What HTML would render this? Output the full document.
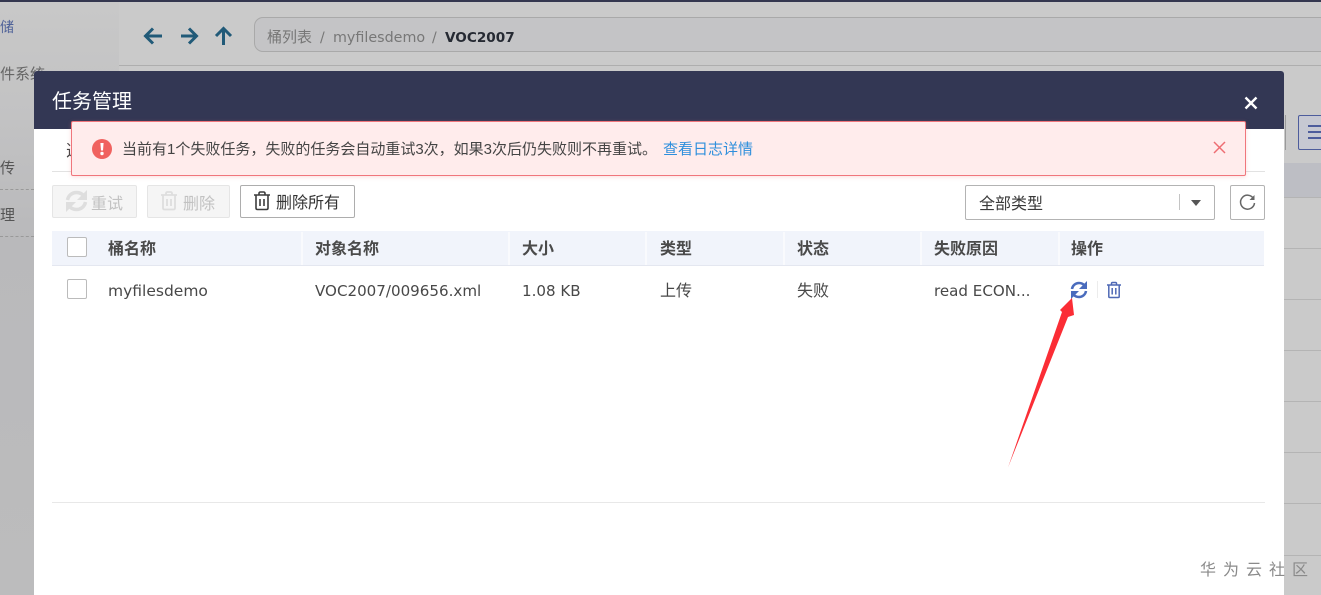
<!DOCTYPE html>
<html lang="zh"><head><meta charset="utf-8"><title>任务管理</title>
<style>
html,body{margin:0;padding:0}
body{width:1321px;height:595px;overflow:hidden;position:relative;background:#cacaca;font-family:"Liberation Sans","Noto Sans CJK SC",sans-serif;color:#3a3a3a}
.a{position:absolute;white-space:nowrap}
.l{position:absolute;background:#b4b4b4;height:1px}
.th{position:absolute;top:240px;font-size:16px;line-height:20px;font-weight:700;color:#4a4a4a;white-space:nowrap}
.td{position:absolute;top:281px;font-family:"DejaVu Sans","Noto Sans CJK SC",sans-serif;font-size:15.1px;line-height:20px;color:#484848;white-space:nowrap}
.tc{position:absolute;top:282px;font-size:16px;line-height:20px;color:#484848;white-space:nowrap}
.sep{position:absolute;top:232px;width:2px;height:33px;background:#f9fafd}
.btn{position:absolute;top:185px;height:33px;box-sizing:border-box;border-radius:2px;font-size:16px;white-space:nowrap}
.dis{background:#f5f5f5;border:1px solid #e5e5e5;color:#c2c2c2}
.cb{position:absolute;left:67px;width:18px;height:18px;border:1px solid #bbb;border-radius:2px;background:#fff}
.dj{font-family:"DejaVu Sans",sans-serif}
</style></head>
<body>
<div class="a" style="left:0;top:0;width:1321px;height:2px;background:#34374f"></div>
<div class="a" style="left:0;top:2px;width:119px;height:593px;background:linear-gradient(180deg,#c8c8c8 0,#c2c2c3 20%,#b9b9bb 40%,#bcbcbd 100%)"></div>
<div class="a" style="left:0;top:17px;font-size:14px;line-height:20px;color:#4f6299">储</div>
<div class="a" style="left:0;top:65px;font-size:15px;line-height:20px;color:#666">件系统</div>
<div class="a" style="left:0;top:159px;font-size:15px;line-height:20px;color:#555">传</div>
<div class="a" style="left:0;top:206px;font-size:15px;line-height:20px;color:#555">理</div>
<div class="a" style="left:0;top:189px;width:34px;border-top:1px dashed #999"></div>
<div class="a" style="left:0;top:236px;width:34px;border-top:1px dashed #999"></div>
<div class="l" style="left:119px;top:65px;width:1202px;background:#aeaeae"></div>

<svg class="a" style="left:140px;top:24px" width="100" height="24" viewBox="0 0 100 24" fill="none" stroke="#215a78" stroke-width="3">
<path d="M22 12H6M13 4.500L5.500 12L13 19.500"/>
<path d="M41 12H57M49 4.500L56.500 12L49 19.500"/>
<path d="M83.500 21V5.500M76 12L83.500 4.500L91 12"/>
</svg>
<div class="a" style="left:254px;top:17px;width:1090px;height:35px;box-sizing:border-box;border:1px solid #a9a9a9;border-radius:9px;background:#c4c4c6"></div>
<div class="a" style="left:267px;top:28px;font-size:15px;line-height:20px;color:#777">桶列表</div>
<div class="a dj" style="left:320px;top:28px;font-size:14px;line-height:20px;color:#777">/</div>
<div class="a dj" style="left:333px;top:28px;font-size:14.300px;line-height:20px;color:#777">myfilesdemo</div>
<div class="a dj" style="left:432px;top:28px;font-size:14px;line-height:20px;color:#777">/</div>
<div class="a dj" style="left:445px;top:28px;font-size:13.600px;line-height:20px;font-weight:700;color:#262a33">VOC2007</div>

<div class="a" style="left:1284px;top:163px;width:37px;height:34px;background:#bdbec4"></div>
<div class="l" style="left:1284px;top:197px;width:37px"></div>
<div class="l" style="left:1284px;top:248px;width:37px"></div>
<div class="l" style="left:1284px;top:299px;width:37px"></div>
<div class="l" style="left:1284px;top:350px;width:37px"></div>
<div class="l" style="left:1284px;top:401px;width:37px"></div>
<div class="l" style="left:1284px;top:452px;width:37px"></div>
<div class="l" style="left:1284px;top:503px;width:37px"></div>
<div class="l" style="left:1284px;top:555px;width:37px"></div>
<div class="a" style="left:1285px;top:115px;width:1px;height:35px;background:#9a9a9a"></div>
<div class="a" style="left:1298px;top:115px;width:30px;height:35px;box-sizing:border-box;border:1px solid #4d5c9c;border-radius:2px;background:#c6c8d2"></div>
<div class="a" style="left:1308px;top:125px;width:13px;height:2px;background:#4d5c9c;box-shadow:0 6px 0 #4d5c9c,0 12px 0 #4d5c9c"></div>

<div class="a" style="left:34px;top:71px;width:1250px;height:524px;background:#fff;border-radius:3px 3px 0 0"></div>
<div class="a" style="left:34px;top:71px;width:1250px;height:58px;background:#333754;border-radius:3px 3px 0 0"></div>
<div class="a" style="left:52px;top:89px;font-size:20px;line-height:26px;color:#fff">任务管理</div>
<svg class="a" style="left:1244px;top:96px" width="14" height="14" viewBox="0 0 14 14" stroke="#fff" stroke-width="2.400"><path d="M1.500 1.500L12.500 12.500M12.500 1.500L1.500 12.500"/></svg>

<div class="a" style="left:66px;top:142px;font-size:16px;line-height:20px;color:#444">选</div>
<div class="l" style="left:52px;top:171px;width:1213px;background:#e2e2e2"></div>

<div class="a" style="left:71px;top:121px;width:1175px;height:55px;box-sizing:border-box;background:#ffecec;border:1px solid #f0767c;border-radius:2px;box-shadow:0 1px 4px rgba(240,120,120,.25)"></div>
<svg class="a" style="left:92px;top:139px" width="20" height="20" viewBox="0 0 20 20"><circle cx="10" cy="10" r="10" fill="#f0625f"/><path d="M8.400 4H11.600L11 11.500H9Z" fill="#fff"/><circle cx="10" cy="14.500" r="1.700" fill="#fff"/></svg>
<div class="a" style="left:122px;top:140px;font-size:15px;line-height:20px;color:#444">当前有1个失败任务，失败的任务会自动重试3次，如果3次后仍失败则不再重试。</div>
<div class="a" style="left:663px;top:140px;font-size:15px;line-height:20px;color:#2f8fdc">查看日志详情</div>
<svg class="a" style="left:1213px;top:141px" width="13" height="13" viewBox="0 0 13 13" stroke="#ee6d72" stroke-width="1.500"><path d="M1 1L12 12M12 1L1 12"/></svg>

<div class="btn dis" style="left:52px;width:85px;padding-left:38px;line-height:37px">重试</div>
<svg class="a" style="left:65px;top:190px" width="23" height="22" viewBox="0 0 23 22" fill="none" stroke="#dedede" stroke-width="3.500"><path d="M2.500 10C3.500 5 7.500 2.500 11.500 2.500C15 2.500 17.500 4 19.500 6.500"/><path d="M22 0V10H12Z" fill="#dedede" stroke="none"/><path d="M20.500 12C19.500 17 15.500 19.500 11.500 19.500C8 19.500 5.500 18 3.500 15.500"/><path d="M1 22V12H11Z" fill="#dedede" stroke="none"/></svg>
<div class="btn dis" style="left:147px;width:83px;padding-left:35px;line-height:37px">删除</div>
<svg class="a" style="left:160px;top:190px" width="18" height="21" viewBox="0 0 18 21" fill="none" stroke="#dedede" stroke-width="1.800"><path d="M1 5H17M6 5V3.500Q6 2 7.500 2H10.500Q12 2 12 3.500V5M3 5V18Q3 19.500 4.500 19.500H13.500Q15 19.500 15 18V5M7 9V16M11 9V16"/></svg>
<div class="btn" style="left:240px;width:115px;border:1px solid #adadad;background:#fff;color:#333;padding-left:35px;line-height:35px">删除所有</div>
<svg class="a" style="left:253px;top:190px" width="18" height="21" viewBox="0 0 18 21" fill="none" stroke="#3d3d3d" stroke-width="1.600"><path d="M1 5H17M6 5V3.500Q6 2 7.500 2H10.500Q12 2 12 3.500V5M3 5V18Q3 19.500 4.500 19.500H13.500Q15 19.500 15 18V5M7 9V16M11 9V16"/></svg>

<div class="a" style="left:965px;top:185px;width:250px;height:35px;box-sizing:border-box;border:1px solid #b3b3b3;border-radius:2px;background:#fff"></div>
<div class="a" style="left:979px;top:195px;font-size:16px;line-height:20px;color:#3a3a3a">全部类型</div>
<div class="a" style="left:1179px;top:194px;width:1px;height:16px;background:#c4c4c4"></div>
<div class="a" style="left:1191px;top:200px;width:0;height:0;border-left:5px solid transparent;border-right:5px solid transparent;border-top:6px solid #555"></div>
<div class="a" style="left:1230px;top:185px;width:35px;height:35px;box-sizing:border-box;border:1px solid #b3b3b3;border-radius:2px;background:#fff"></div>
<svg class="a" style="left:1239px;top:194px" width="18" height="18" viewBox="0 0 18 18" fill="none" stroke="#666" stroke-width="1.500"><path d="M14.500 4.500A7 7 0 1 0 15.500 9"/><path d="M15.500 1V6H10.500Z" fill="#666" stroke="none"/></svg>

<div class="a" style="left:52px;top:231px;width:1212px;height:34px;background:#f1f4fb;border-bottom:1px solid #e4e7f0"></div>
<div class="sep" style="left:301px"></div><div class="sep" style="left:508px"></div><div class="sep" style="left:645px"></div><div class="sep" style="left:783px"></div><div class="sep" style="left:920px"></div><div class="sep" style="left:1058px"></div>
<div class="cb" style="top:237px"></div>
<div class="th" style="left:108px">桶名称</div><div class="th" style="left:315px">对象名称</div><div class="th" style="left:522px">大小</div><div class="th" style="left:660px">类型</div><div class="th" style="left:797px">状态</div><div class="th" style="left:934px">失败原因</div><div class="th" style="left:1071px">操作</div>

<div class="cb" style="top:279px"></div>
<div class="td" style="left:108px;font-size:15.500px">myfilesdemo</div><div class="td" style="left:315px">VOC2007/009656.xml</div><div class="td" style="left:522px">1.08 KB</div><div class="tc" style="left:660px">上传</div><div class="tc" style="left:797px">失败</div><div class="td" style="left:934px">read ECON...</div>

<svg class="a" style="left:1070px;top:281px" width="18" height="18" viewBox="0 0 18 18" fill="none" stroke="#4a6cbd" stroke-width="2.500"><path d="M2 8C2.500 4.500 5.500 2 9 2C11.500 2 13.500 3 15 5"/><path d="M17 0V8H9Z" fill="#4a6cbd" stroke="none"/><path d="M16 10C15.500 13.500 12.500 16 9 16C6.500 16 4.500 15 3 13"/><path d="M1 18V10H9Z" fill="#4a6cbd" stroke="none"/></svg>
<div class="a" style="left:1097px;top:281px;width:1px;height:17px;background:#ececec"></div>
<svg class="a" style="left:1106px;top:281px" width="16" height="18" viewBox="0 0 16 18" fill="none" stroke="#4f69b5" stroke-width="1.500"><path d="M1 4H15M5.500 4V2.500Q5.500 1.500 6.500 1.500H9.500Q10.500 1.500 10.500 2.500V4M2.800 4V15.500Q2.800 16.500 3.800 16.500H12.200Q13.200 16.500 13.200 15.500V4M6.200 7V13.500M9.800 7V13.500"/></svg>

<div class="l" style="left:52px;top:502px;width:1213px;background:#e8e8e8"></div>

<svg class="a" style="left:1005px;top:295px" width="75" height="175" viewBox="0 0 75 175"><path d="M3 172.500L57 17L55 15L67 3L69 20L63 22Z" fill="#fb2d35"/></svg>

<div class="a" style="left:1200px;top:561px;font-size:16px;line-height:20px;letter-spacing:7px;color:#8a8a8a">华为云社区</div>
</body></html>
